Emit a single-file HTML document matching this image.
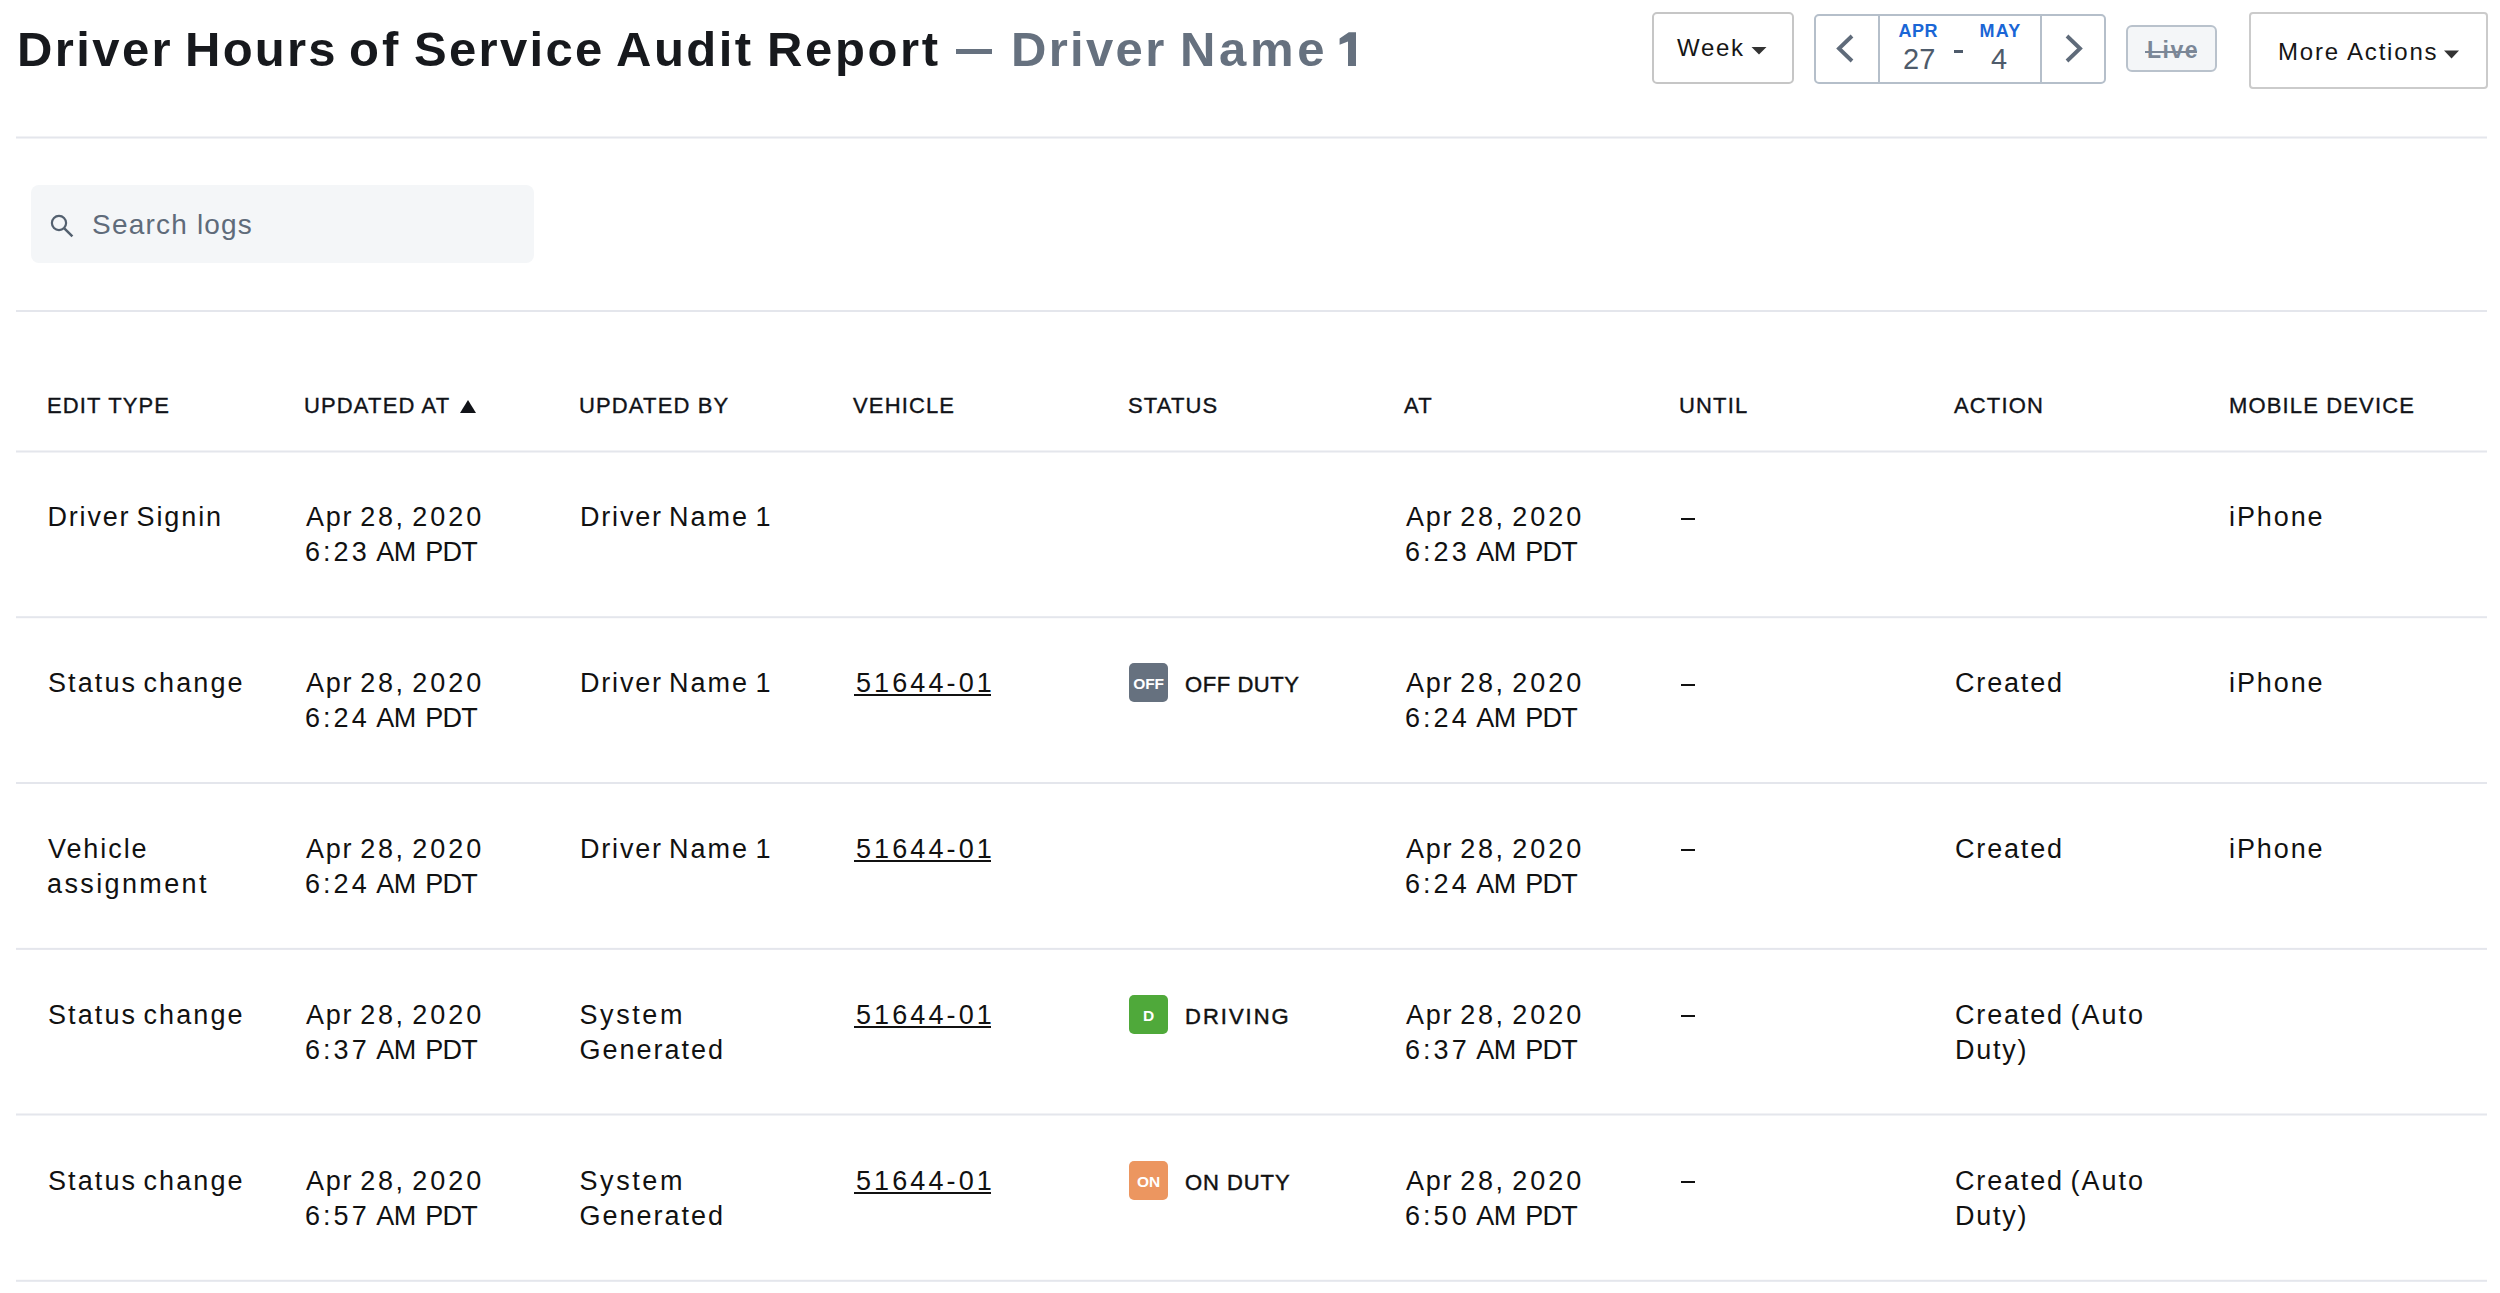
<!DOCTYPE html>
<html><head><meta charset="utf-8"><title>Driver Hours of Service Audit Report</title>
<style>
html,body{margin:0;padding:0;background:#fff;width:2500px;height:1293px;overflow:hidden;position:relative}
body{font-family:"Liberation Sans", sans-serif}
.t{position:absolute;white-space:nowrap;line-height:1;font-family:"Liberation Sans", sans-serif}
.b{position:absolute}
</style></head><body>
<div class="t" style="left:17px;top:24.52px;font-size:49px;letter-spacing:2.4px;font-weight:bold;color:#17191d;">Driver</div>
<div class="t" style="left:185px;top:24.52px;font-size:49px;letter-spacing:2.25px;font-weight:bold;color:#17191d;">Hours</div>
<div class="t" style="left:349px;top:24.52px;font-size:49px;letter-spacing:3.0px;font-weight:bold;color:#17191d;">of</div>
<div class="t" style="left:414px;top:24.52px;font-size:49px;letter-spacing:2.333px;font-weight:bold;color:#17191d;">Service</div>
<div class="t" style="left:616px;top:24.52px;font-size:49px;letter-spacing:2.5px;font-weight:bold;color:#17191d;">Audit</div>
<div class="t" style="left:767px;top:24.52px;font-size:49px;letter-spacing:2.64px;font-weight:bold;color:#17191d;">Report</div>
<div class="b" style="left:956px;top:49px;width:36px;height:5px;background:#66717f"></div>
<div class="t" style="left:1011px;top:24.52px;font-size:49px;letter-spacing:2.32px;font-weight:bold;color:#66717f;">Driver</div>
<div class="t" style="left:1180px;top:24.52px;font-size:49px;letter-spacing:3.667px;font-weight:bold;color:#66717f;">Name</div>
<svg class="b" style="left:1330px;top:30px" width="30" height="40" viewBox="1330 30 30 40"><polygon points="1339.6,38.4 1348.8,32.2 1356,32.2 1356,66 1348,66 1348,41.6 1339.6,44.8" fill="#66717f"/></svg>
<div class="b" style="left:1652px;top:12px;width:142px;height:72px;border:2px solid #c6c6c6;border-radius:5px;box-sizing:border-box;background:#fff"></div>
<div class="t" style="left:1677px;top:35.68px;font-size:24px;letter-spacing:1.7px;font-weight:normal;color:#161616;">Week</div>
<svg class="b" style="left:1751px;top:47px" width="16" height="8" viewBox="0 0 16 8"><path d="M0.5 0 L15.5 0 L8 7.5 Z" fill="#333"/></svg>
<div class="b" style="left:1814px;top:14px;width:292px;height:70px;border:2px solid #b5bfca;border-radius:5px;box-sizing:border-box;background:#fff"></div>
<div class="b" style="left:1878px;top:14px;width:2px;height:70px;background:#b5bfca"></div>
<div class="b" style="left:2040px;top:14px;width:2px;height:70px;background:#b5bfca"></div>
<svg class="b" style="left:1834px;top:33px" width="22" height="32" viewBox="0 0 22 32"><path d="M18 3 L5 15.5 L18 28" fill="none" stroke="#5f6b7a" stroke-width="3.9"/></svg>
<svg class="b" style="left:2063px;top:33px" width="22" height="32" viewBox="0 0 22 32"><path d="M4 3 L17 15.5 L4 28" fill="none" stroke="#5f6b7a" stroke-width="3.9"/></svg>
<div class="t" style="left:1898.5px;top:21.76px;font-size:18px;letter-spacing:0.5px;font-weight:bold;color:#1a66d6;">APR</div>
<div class="t" style="left:1979.5px;top:21.76px;font-size:18px;letter-spacing:1.2px;font-weight:bold;color:#1a66d6;">MAY</div>
<div class="t" style="left:1903px;top:45.45px;font-size:29px;letter-spacing:0px;font-weight:normal;color:#4e5b6b;">27</div>
<div class="t" style="left:1991px;top:45.45px;font-size:29px;letter-spacing:0px;font-weight:normal;color:#4e5b6b;">4</div>
<div class="b" style="left:1954px;top:50px;width:9px;height:3px;background:#4e5b6b"></div>
<div class="b" style="left:2126px;top:25px;width:91px;height:47px;border:2px solid #b9c2cc;border-radius:6px;box-sizing:border-box;background:#f4f6f8"></div>
<div class="t" style="left:2147px;top:38.53px;font-size:23px;letter-spacing:1.5px;font-weight:bold;color:#7b8797;">Live</div>
<div class="b" style="left:2145px;top:50.5px;width:52px;height:2px;background:#7b8797"></div>
<div class="b" style="left:2249px;top:12px;width:239px;height:77px;border:2px solid #cbcbcb;border-radius:4px;box-sizing:border-box;background:#fff"></div>
<div class="t" style="left:2278px;top:40.18px;font-size:24px;letter-spacing:1.8px;font-weight:normal;color:#161616;">More Actions</div>
<svg class="b" style="left:2444px;top:50px" width="15" height="9" viewBox="0 0 15 9"><path d="M0 0.5 L15 0.5 L7.5 8.5 Z" fill="#333"/></svg>
<div class="b" style="left:16px;top:136px;width:2471px;height:1px;background:rgba(228,230,236,0.50)"></div>
<div class="b" style="left:16px;top:137px;width:2471px;height:1px;background:rgba(228,230,236,1.00)"></div>
<div class="b" style="left:16px;top:138px;width:2471px;height:1px;background:rgba(228,230,236,0.50)"></div>
<div class="b" style="left:16px;top:310px;width:2471px;height:1px;background:rgba(228,230,236,1.00)"></div>
<div class="b" style="left:16px;top:311px;width:2471px;height:1px;background:rgba(228,230,236,1.00)"></div>
<div class="b" style="left:16px;top:450px;width:2471px;height:1px;background:rgba(228,230,236,0.50)"></div>
<div class="b" style="left:16px;top:451px;width:2471px;height:1px;background:rgba(228,230,236,1.00)"></div>
<div class="b" style="left:16px;top:452px;width:2471px;height:1px;background:rgba(228,230,236,0.50)"></div>
<div class="b" style="left:16px;top:616px;width:2471px;height:1px;background:rgba(228,230,236,0.80)"></div>
<div class="b" style="left:16px;top:617px;width:2471px;height:1px;background:rgba(228,230,236,1.00)"></div>
<div class="b" style="left:16px;top:618px;width:2471px;height:1px;background:rgba(228,230,236,0.20)"></div>
<div class="b" style="left:16px;top:782px;width:2471px;height:1px;background:rgba(228,230,236,1.00)"></div>
<div class="b" style="left:16px;top:783px;width:2471px;height:1px;background:rgba(228,230,236,1.00)"></div>
<div class="b" style="left:16px;top:947px;width:2471px;height:1px;background:rgba(228,230,236,0.10)"></div>
<div class="b" style="left:16px;top:948px;width:2471px;height:1px;background:rgba(228,230,236,1.00)"></div>
<div class="b" style="left:16px;top:949px;width:2471px;height:1px;background:rgba(228,230,236,0.90)"></div>
<div class="b" style="left:16px;top:1113px;width:2471px;height:1px;background:rgba(228,230,236,0.50)"></div>
<div class="b" style="left:16px;top:1114px;width:2471px;height:1px;background:rgba(228,230,236,1.00)"></div>
<div class="b" style="left:16px;top:1115px;width:2471px;height:1px;background:rgba(228,230,236,0.50)"></div>
<div class="b" style="left:16px;top:1279px;width:2471px;height:1px;background:rgba(228,230,236,0.20)"></div>
<div class="b" style="left:16px;top:1280px;width:2471px;height:1px;background:rgba(228,230,236,1.00)"></div>
<div class="b" style="left:16px;top:1281px;width:2471px;height:1px;background:rgba(228,230,236,0.80)"></div>
<div class="b" style="left:31px;top:185px;width:503px;height:78px;background:#f4f6f8;border-radius:8px"></div>
<svg class="b" style="left:49px;top:213px" width="26" height="26" viewBox="0 0 26 26"><circle cx="10" cy="10" r="7.1" fill="none" stroke="#53606f" stroke-width="2.2"/><path d="M15.3 15.3 L23.4 23.4" stroke="#53606f" stroke-width="2.5"/></svg>
<div class="t" style="left:92px;top:210.80px;font-size:28px;letter-spacing:1.2px;font-weight:normal;color:#5f6b7a;">Search logs</div>
<div class="t" style="left:47px;top:395.18px;font-size:22px;letter-spacing:1.14px;font-weight:normal;color:#111318;-webkit-text-stroke:0.35px #111318">EDIT TYPE</div>
<div class="t" style="left:304px;top:395.18px;font-size:22px;letter-spacing:1.14px;font-weight:normal;color:#111318;-webkit-text-stroke:0.35px #111318">UPDATED AT</div>
<div class="t" style="left:579px;top:395.18px;font-size:22px;letter-spacing:1.14px;font-weight:normal;color:#111318;-webkit-text-stroke:0.35px #111318">UPDATED BY</div>
<div class="t" style="left:853px;top:395.18px;font-size:22px;letter-spacing:1.14px;font-weight:normal;color:#111318;-webkit-text-stroke:0.35px #111318">VEHICLE</div>
<div class="t" style="left:1128px;top:395.18px;font-size:22px;letter-spacing:1.14px;font-weight:normal;color:#111318;-webkit-text-stroke:0.35px #111318">STATUS</div>
<div class="t" style="left:1404px;top:395.18px;font-size:22px;letter-spacing:1.14px;font-weight:normal;color:#111318;-webkit-text-stroke:0.35px #111318">AT</div>
<div class="t" style="left:1679px;top:395.18px;font-size:22px;letter-spacing:1.14px;font-weight:normal;color:#111318;-webkit-text-stroke:0.35px #111318">UNTIL</div>
<div class="t" style="left:1954px;top:395.18px;font-size:22px;letter-spacing:1.14px;font-weight:normal;color:#111318;-webkit-text-stroke:0.35px #111318">ACTION</div>
<div class="t" style="left:2229px;top:395.18px;font-size:22px;letter-spacing:1.14px;font-weight:normal;color:#111318;-webkit-text-stroke:0.35px #111318">MOBILE DEVICE</div>
<svg class="b" style="left:460px;top:400px" width="16" height="13" viewBox="0 0 16 13"><path d="M8 0 L16 13 L0 13 Z" fill="#111318"/></svg>
<div class="t" style="left:47.5px;top:504.34px;font-size:27px;letter-spacing:1.8px;font-weight:normal;color:#111;">Driver</div>
<div class="t" style="left:136.5px;top:504.34px;font-size:27px;letter-spacing:1.9px;font-weight:normal;color:#111;">Signin</div>
<div class="t" style="left:306px;top:504.34px;font-size:27px;letter-spacing:1.8px;font-weight:normal;color:#111;">Apr</div>
<div class="t" style="left:360.3px;top:504.34px;font-size:27px;letter-spacing:2.6px;font-weight:normal;color:#111;">28,</div>
<div class="t" style="left:412.3px;top:504.34px;font-size:27px;letter-spacing:3.0px;font-weight:normal;color:#111;">2020</div>
<div class="t" style="left:305px;top:539.34px;font-size:27px;letter-spacing:3.033px;font-weight:normal;color:#111;">6:23</div>
<div class="t" style="left:376.2px;top:539.34px;font-size:27px;letter-spacing:-0.4px;font-weight:normal;color:#111;">AM</div>
<div class="t" style="left:425.2px;top:539.34px;font-size:27px;letter-spacing:-0.7px;font-weight:normal;color:#111;">PDT</div>
<div class="t" style="left:580px;top:504.34px;font-size:27px;letter-spacing:1.8px;font-weight:normal;color:#111;">Driver</div>
<div class="t" style="left:669px;top:504.34px;font-size:27px;letter-spacing:2.0px;font-weight:normal;color:#111;">Name</div>
<div class="t" style="left:755.5px;top:504.34px;font-size:27px;letter-spacing:0px;font-weight:normal;color:#111;">1</div>
<div class="t" style="left:1406px;top:504.34px;font-size:27px;letter-spacing:1.8px;font-weight:normal;color:#111;">Apr</div>
<div class="t" style="left:1460.3px;top:504.34px;font-size:27px;letter-spacing:2.6px;font-weight:normal;color:#111;">28,</div>
<div class="t" style="left:1512.3px;top:504.34px;font-size:27px;letter-spacing:3.0px;font-weight:normal;color:#111;">2020</div>
<div class="t" style="left:1405px;top:539.34px;font-size:27px;letter-spacing:3.033px;font-weight:normal;color:#111;">6:23</div>
<div class="t" style="left:1476.2px;top:539.34px;font-size:27px;letter-spacing:-0.4px;font-weight:normal;color:#111;">AM</div>
<div class="t" style="left:1525.2px;top:539.34px;font-size:27px;letter-spacing:-0.7px;font-weight:normal;color:#111;">PDT</div>
<div class="b" style="left:1681px;top:518px;width:14px;height:2px;background:#111"></div>
<div class="t" style="left:2229px;top:504.34px;font-size:27px;letter-spacing:1.9px;font-weight:normal;color:#111;">iPhone</div>
<div class="t" style="left:48px;top:670.14px;font-size:27px;letter-spacing:2.1px;font-weight:normal;color:#111;">Status</div>
<div class="t" style="left:143.5px;top:670.14px;font-size:27px;letter-spacing:2.1px;font-weight:normal;color:#111;">change</div>
<div class="t" style="left:306px;top:670.14px;font-size:27px;letter-spacing:1.8px;font-weight:normal;color:#111;">Apr</div>
<div class="t" style="left:360.3px;top:670.14px;font-size:27px;letter-spacing:2.6px;font-weight:normal;color:#111;">28,</div>
<div class="t" style="left:412.3px;top:670.14px;font-size:27px;letter-spacing:3.0px;font-weight:normal;color:#111;">2020</div>
<div class="t" style="left:305px;top:705.14px;font-size:27px;letter-spacing:3.033px;font-weight:normal;color:#111;">6:24</div>
<div class="t" style="left:376.2px;top:705.14px;font-size:27px;letter-spacing:-0.4px;font-weight:normal;color:#111;">AM</div>
<div class="t" style="left:425.2px;top:705.14px;font-size:27px;letter-spacing:-0.7px;font-weight:normal;color:#111;">PDT</div>
<div class="t" style="left:580px;top:670.14px;font-size:27px;letter-spacing:1.8px;font-weight:normal;color:#111;">Driver</div>
<div class="t" style="left:669px;top:670.14px;font-size:27px;letter-spacing:2.0px;font-weight:normal;color:#111;">Name</div>
<div class="t" style="left:755.5px;top:670.14px;font-size:27px;letter-spacing:0px;font-weight:normal;color:#111;">1</div>
<div class="t" style="left:856px;top:670.14px;font-size:27px;letter-spacing:3.1px;font-weight:normal;color:#111;">51644-01</div>
<div class="b" style="left:854px;top:694px;width:137px;height:2px;background:#111"></div>
<div class="b" style="left:1129px;top:663px;width:39px;height:39px;background:#66717f;border-radius:5px"></div>
<div class="t" style="left:1129px;top:676.28px;font-size:15.5px;letter-spacing:-0.2px;font-weight:bold;color:#fff;"><span style="display:inline-block;width:39px;text-align:center">OFF</span></div>
<div class="t" style="left:1185px;top:674.18px;font-size:22px;letter-spacing:0.57px;font-weight:normal;color:#111;-webkit-text-stroke:0.45px #111">OFF DUTY</div>
<div class="t" style="left:1406px;top:670.14px;font-size:27px;letter-spacing:1.8px;font-weight:normal;color:#111;">Apr</div>
<div class="t" style="left:1460.3px;top:670.14px;font-size:27px;letter-spacing:2.6px;font-weight:normal;color:#111;">28,</div>
<div class="t" style="left:1512.3px;top:670.14px;font-size:27px;letter-spacing:3.0px;font-weight:normal;color:#111;">2020</div>
<div class="t" style="left:1405px;top:705.14px;font-size:27px;letter-spacing:3.033px;font-weight:normal;color:#111;">6:24</div>
<div class="t" style="left:1476.2px;top:705.14px;font-size:27px;letter-spacing:-0.4px;font-weight:normal;color:#111;">AM</div>
<div class="t" style="left:1525.2px;top:705.14px;font-size:27px;letter-spacing:-0.7px;font-weight:normal;color:#111;">PDT</div>
<div class="b" style="left:1681px;top:684px;width:14px;height:2px;background:#111"></div>
<div class="t" style="left:1955px;top:670.14px;font-size:27px;letter-spacing:1.833px;font-weight:normal;color:#111;">Created</div>
<div class="t" style="left:2229px;top:670.14px;font-size:27px;letter-spacing:1.9px;font-weight:normal;color:#111;">iPhone</div>
<div class="t" style="left:48px;top:835.94px;font-size:27px;letter-spacing:1.917px;font-weight:normal;color:#111;">Vehicle</div>
<div class="t" style="left:47px;top:870.94px;font-size:27px;letter-spacing:2.378px;font-weight:normal;color:#111;">assignment</div>
<div class="t" style="left:306px;top:835.94px;font-size:27px;letter-spacing:1.8px;font-weight:normal;color:#111;">Apr</div>
<div class="t" style="left:360.3px;top:835.94px;font-size:27px;letter-spacing:2.6px;font-weight:normal;color:#111;">28,</div>
<div class="t" style="left:412.3px;top:835.94px;font-size:27px;letter-spacing:3.0px;font-weight:normal;color:#111;">2020</div>
<div class="t" style="left:305px;top:870.94px;font-size:27px;letter-spacing:3.033px;font-weight:normal;color:#111;">6:24</div>
<div class="t" style="left:376.2px;top:870.94px;font-size:27px;letter-spacing:-0.4px;font-weight:normal;color:#111;">AM</div>
<div class="t" style="left:425.2px;top:870.94px;font-size:27px;letter-spacing:-0.7px;font-weight:normal;color:#111;">PDT</div>
<div class="t" style="left:580px;top:835.94px;font-size:27px;letter-spacing:1.8px;font-weight:normal;color:#111;">Driver</div>
<div class="t" style="left:669px;top:835.94px;font-size:27px;letter-spacing:2.0px;font-weight:normal;color:#111;">Name</div>
<div class="t" style="left:755.5px;top:835.94px;font-size:27px;letter-spacing:0px;font-weight:normal;color:#111;">1</div>
<div class="t" style="left:856px;top:835.94px;font-size:27px;letter-spacing:3.1px;font-weight:normal;color:#111;">51644-01</div>
<div class="b" style="left:854px;top:860px;width:137px;height:2px;background:#111"></div>
<div class="t" style="left:1406px;top:835.94px;font-size:27px;letter-spacing:1.8px;font-weight:normal;color:#111;">Apr</div>
<div class="t" style="left:1460.3px;top:835.94px;font-size:27px;letter-spacing:2.6px;font-weight:normal;color:#111;">28,</div>
<div class="t" style="left:1512.3px;top:835.94px;font-size:27px;letter-spacing:3.0px;font-weight:normal;color:#111;">2020</div>
<div class="t" style="left:1405px;top:870.94px;font-size:27px;letter-spacing:3.033px;font-weight:normal;color:#111;">6:24</div>
<div class="t" style="left:1476.2px;top:870.94px;font-size:27px;letter-spacing:-0.4px;font-weight:normal;color:#111;">AM</div>
<div class="t" style="left:1525.2px;top:870.94px;font-size:27px;letter-spacing:-0.7px;font-weight:normal;color:#111;">PDT</div>
<div class="b" style="left:1681px;top:849px;width:14px;height:2px;background:#111"></div>
<div class="t" style="left:1955px;top:835.94px;font-size:27px;letter-spacing:1.833px;font-weight:normal;color:#111;">Created</div>
<div class="t" style="left:2229px;top:835.94px;font-size:27px;letter-spacing:1.9px;font-weight:normal;color:#111;">iPhone</div>
<div class="t" style="left:48px;top:1001.74px;font-size:27px;letter-spacing:2.1px;font-weight:normal;color:#111;">Status</div>
<div class="t" style="left:143.5px;top:1001.74px;font-size:27px;letter-spacing:2.1px;font-weight:normal;color:#111;">change</div>
<div class="t" style="left:306px;top:1001.74px;font-size:27px;letter-spacing:1.8px;font-weight:normal;color:#111;">Apr</div>
<div class="t" style="left:360.3px;top:1001.74px;font-size:27px;letter-spacing:2.6px;font-weight:normal;color:#111;">28,</div>
<div class="t" style="left:412.3px;top:1001.74px;font-size:27px;letter-spacing:3.0px;font-weight:normal;color:#111;">2020</div>
<div class="t" style="left:305px;top:1036.74px;font-size:27px;letter-spacing:3.033px;font-weight:normal;color:#111;">6:37</div>
<div class="t" style="left:376.2px;top:1036.74px;font-size:27px;letter-spacing:-0.4px;font-weight:normal;color:#111;">AM</div>
<div class="t" style="left:425.2px;top:1036.74px;font-size:27px;letter-spacing:-0.7px;font-weight:normal;color:#111;">PDT</div>
<div class="t" style="left:579.5px;top:1001.74px;font-size:27px;letter-spacing:2.58px;font-weight:normal;color:#111;">System</div>
<div class="t" style="left:579.5px;top:1036.74px;font-size:27px;letter-spacing:2.0px;font-weight:normal;color:#111;">Generated</div>
<div class="t" style="left:856px;top:1001.74px;font-size:27px;letter-spacing:3.1px;font-weight:normal;color:#111;">51644-01</div>
<div class="b" style="left:854px;top:1026px;width:137px;height:2px;background:#111"></div>
<div class="b" style="left:1129px;top:995px;width:39px;height:39px;background:#4fa93a;border-radius:5px"></div>
<div class="t" style="left:1129px;top:1007.88px;font-size:15.5px;letter-spacing:-0.2px;font-weight:bold;color:#fff;"><span style="display:inline-block;width:39px;text-align:center">D</span></div>
<div class="t" style="left:1185px;top:1005.78px;font-size:22px;letter-spacing:2.0px;font-weight:normal;color:#111;-webkit-text-stroke:0.45px #111">DRIVING</div>
<div class="t" style="left:1406px;top:1001.74px;font-size:27px;letter-spacing:1.8px;font-weight:normal;color:#111;">Apr</div>
<div class="t" style="left:1460.3px;top:1001.74px;font-size:27px;letter-spacing:2.6px;font-weight:normal;color:#111;">28,</div>
<div class="t" style="left:1512.3px;top:1001.74px;font-size:27px;letter-spacing:3.0px;font-weight:normal;color:#111;">2020</div>
<div class="t" style="left:1405px;top:1036.74px;font-size:27px;letter-spacing:3.033px;font-weight:normal;color:#111;">6:37</div>
<div class="t" style="left:1476.2px;top:1036.74px;font-size:27px;letter-spacing:-0.4px;font-weight:normal;color:#111;">AM</div>
<div class="t" style="left:1525.2px;top:1036.74px;font-size:27px;letter-spacing:-0.7px;font-weight:normal;color:#111;">PDT</div>
<div class="b" style="left:1681px;top:1015px;width:14px;height:2px;background:#111"></div>
<div class="t" style="left:1955px;top:1001.74px;font-size:27px;letter-spacing:1.833px;font-weight:normal;color:#111;">Created</div>
<div class="t" style="left:2070.5px;top:1001.74px;font-size:27px;letter-spacing:2.0px;font-weight:normal;color:#111;">(Auto</div>
<div class="t" style="left:1955px;top:1036.74px;font-size:27px;letter-spacing:1.75px;font-weight:normal;color:#111;">Duty)</div>
<div class="t" style="left:48px;top:1167.54px;font-size:27px;letter-spacing:2.1px;font-weight:normal;color:#111;">Status</div>
<div class="t" style="left:143.5px;top:1167.54px;font-size:27px;letter-spacing:2.1px;font-weight:normal;color:#111;">change</div>
<div class="t" style="left:306px;top:1167.54px;font-size:27px;letter-spacing:1.8px;font-weight:normal;color:#111;">Apr</div>
<div class="t" style="left:360.3px;top:1167.54px;font-size:27px;letter-spacing:2.6px;font-weight:normal;color:#111;">28,</div>
<div class="t" style="left:412.3px;top:1167.54px;font-size:27px;letter-spacing:3.0px;font-weight:normal;color:#111;">2020</div>
<div class="t" style="left:305px;top:1202.54px;font-size:27px;letter-spacing:3.033px;font-weight:normal;color:#111;">6:57</div>
<div class="t" style="left:376.2px;top:1202.54px;font-size:27px;letter-spacing:-0.4px;font-weight:normal;color:#111;">AM</div>
<div class="t" style="left:425.2px;top:1202.54px;font-size:27px;letter-spacing:-0.7px;font-weight:normal;color:#111;">PDT</div>
<div class="t" style="left:579.5px;top:1167.54px;font-size:27px;letter-spacing:2.58px;font-weight:normal;color:#111;">System</div>
<div class="t" style="left:579.5px;top:1202.54px;font-size:27px;letter-spacing:2.0px;font-weight:normal;color:#111;">Generated</div>
<div class="t" style="left:856px;top:1167.54px;font-size:27px;letter-spacing:3.1px;font-weight:normal;color:#111;">51644-01</div>
<div class="b" style="left:854px;top:1192px;width:137px;height:2px;background:#111"></div>
<div class="b" style="left:1129px;top:1161px;width:39px;height:39px;background:#ec9660;border-radius:5px"></div>
<div class="t" style="left:1129px;top:1173.68px;font-size:15.5px;letter-spacing:-0.2px;font-weight:bold;color:#fff;"><span style="display:inline-block;width:39px;text-align:center">ON</span></div>
<div class="t" style="left:1185px;top:1171.58px;font-size:22px;letter-spacing:0.93px;font-weight:normal;color:#111;-webkit-text-stroke:0.45px #111">ON DUTY</div>
<div class="t" style="left:1406px;top:1167.54px;font-size:27px;letter-spacing:1.8px;font-weight:normal;color:#111;">Apr</div>
<div class="t" style="left:1460.3px;top:1167.54px;font-size:27px;letter-spacing:2.6px;font-weight:normal;color:#111;">28,</div>
<div class="t" style="left:1512.3px;top:1167.54px;font-size:27px;letter-spacing:3.0px;font-weight:normal;color:#111;">2020</div>
<div class="t" style="left:1405px;top:1202.54px;font-size:27px;letter-spacing:3.033px;font-weight:normal;color:#111;">6:50</div>
<div class="t" style="left:1476.2px;top:1202.54px;font-size:27px;letter-spacing:-0.4px;font-weight:normal;color:#111;">AM</div>
<div class="t" style="left:1525.2px;top:1202.54px;font-size:27px;letter-spacing:-0.7px;font-weight:normal;color:#111;">PDT</div>
<div class="b" style="left:1681px;top:1181px;width:14px;height:2px;background:#111"></div>
<div class="t" style="left:1955px;top:1167.54px;font-size:27px;letter-spacing:1.833px;font-weight:normal;color:#111;">Created</div>
<div class="t" style="left:2070.5px;top:1167.54px;font-size:27px;letter-spacing:2.0px;font-weight:normal;color:#111;">(Auto</div>
<div class="t" style="left:1955px;top:1202.54px;font-size:27px;letter-spacing:1.75px;font-weight:normal;color:#111;">Duty)</div>
</body></html>
